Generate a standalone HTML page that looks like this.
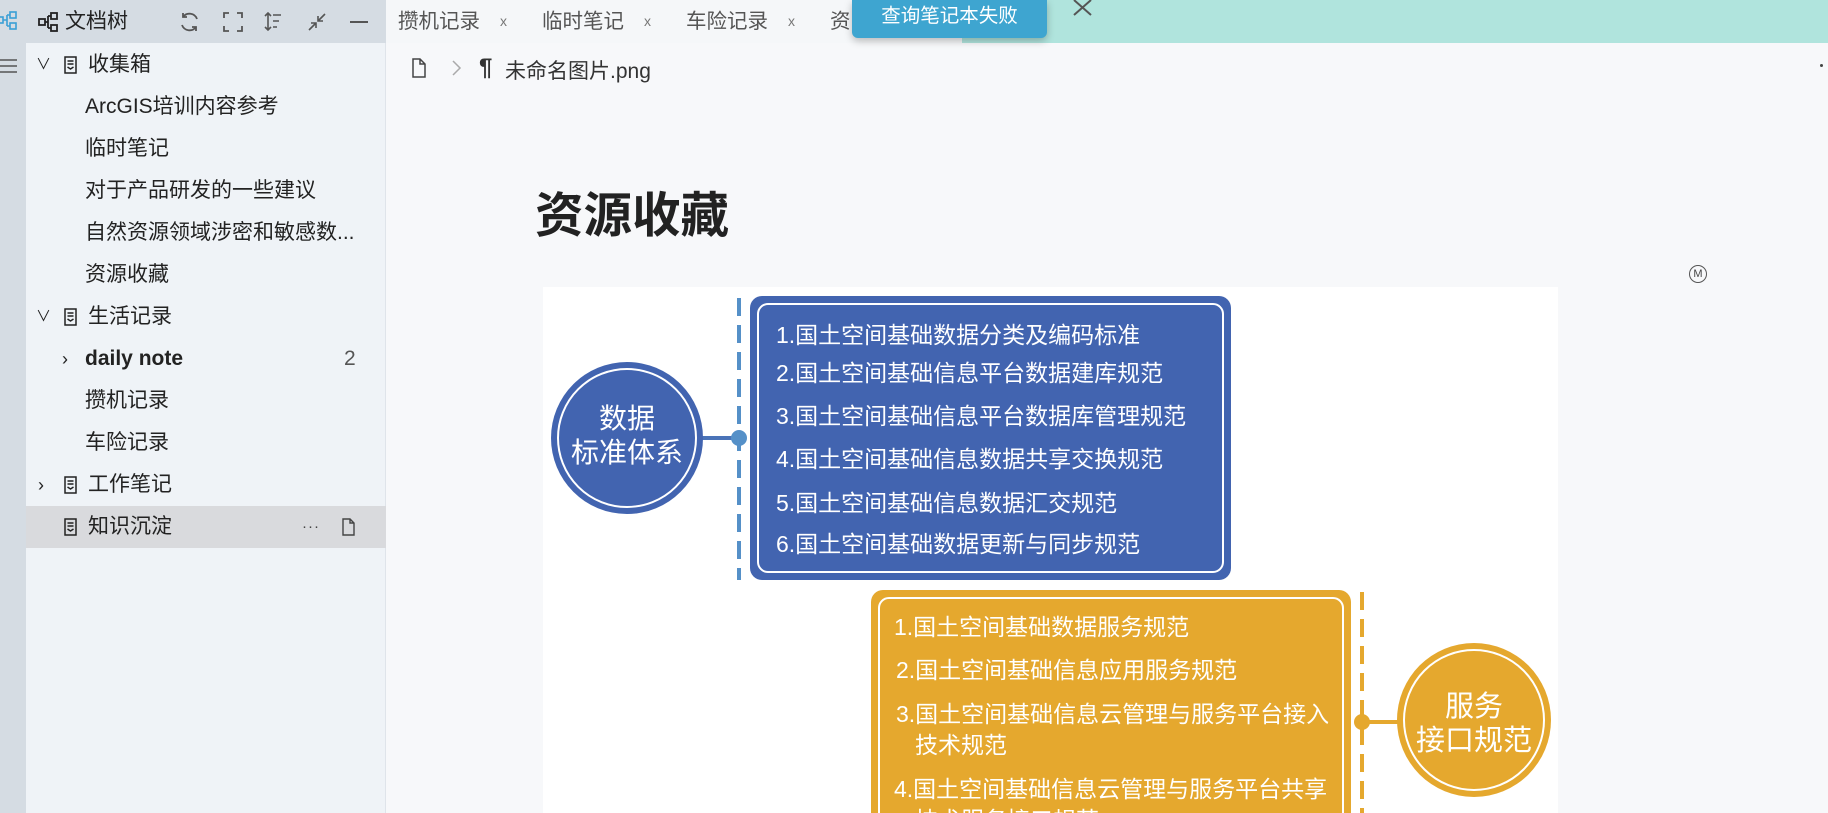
<!DOCTYPE html>
<html><head><meta charset="utf-8"><style>
*{margin:0;padding:0;box-sizing:border-box}
html,body{width:1828px;height:813px;overflow:hidden}
body{background:#f7f8fa;font-family:"Liberation Sans","Noto Sans CJK SC",sans-serif;color:#222;position:relative}
.abs{position:absolute}
.strip{left:0;top:0;width:26px;height:813px;background:#d5dce3}
.side{left:26px;top:0;width:360px;height:813px;background:#eff3f7;border-right:1px solid #dfe4ea}
.shead{left:0;top:0;width:386px;height:43px;background:#d5dce3}
.row{position:absolute;left:26px;width:360px;height:42px;font-size:21px;line-height:42px;white-space:nowrap}
.tabs{left:386px;top:0;width:576px;height:43px;background:#f5f7f9}
.teal{left:962px;top:0;width:866px;height:43px;background:#b0e4dd}
.tab{position:absolute;top:0;line-height:43px;font-size:20.5px;color:#555}
.tx{position:absolute;top:0;line-height:43px;font-size:14px;color:#777}
</style></head><body>
<div class="abs strip"></div>
<div class="abs side"></div>
<div class="abs shead"></div>
<svg class="abs" style="left:0;top:10px" width="20" height="22" viewBox="0 0 20 22"><g fill="none" stroke="#3a9fd6" stroke-width="1.6"><rect x="-3" y="7" width="6" height="6"/><rect x="10" y="2" width="6" height="6"/><rect x="10" y="13" width="6" height="6"/><path d="M3 10h4M7 5v11M7 5h3M7 16h3"/></g></svg>
<svg class="abs" style="left:0;top:56px" width="20" height="20"><g stroke="#555" stroke-width="1.6"><path d="M0 4h17M0 10h17M0 16h17"/></g></svg>
<svg class="abs" style="left:38px;top:12px" width="22" height="22" viewBox="0 0 22 22"><g fill="none" stroke="#222" stroke-width="1.8"><rect x="1" y="7" width="6" height="6"/><rect x="13" y="1" width="6" height="6"/><rect x="13" y="13" width="6" height="6"/><path d="M7 10h3M10 4v12M10 4h3M10 16h3"/></g></svg>
<div class="abs" style="left:65px;top:0;line-height:43px;font-size:21px">文档树</div>
<svg class="abs" style="left:178px;top:11px" width="24" height="22" viewBox="0 0 24 22"><g fill="none" stroke="#555" stroke-width="1.8"><path d="M19 8A8 8 0 0 0 5 6M4 14a8 8 0 0 0 14 2"/><path d="M5 2v4h4M18 20v-4h-4"/></g></svg>
<svg class="abs" style="left:223px;top:12px" width="20" height="20"><g fill="none" stroke="#555" stroke-width="1.8"><path d="M1 6V1h5M14 1h5v5M19 14v5h-5M6 19H1v-5"/></g></svg>
<svg class="abs" style="left:264px;top:12px" width="20" height="20"><g fill="none" stroke="#555" stroke-width="1.6"><path d="M4 1v17M1 4l3-3 3 3M1 15l3 3 3-3M9 3h8M9 9h6M9 15h4"/></g></svg>
<svg class="abs" style="left:307px;top:12px" width="20" height="20"><g fill="none" stroke="#555" stroke-width="1.6"><path d="M18 2l-7 7M11 4v5h5M2 18l7-7M4 11h5v5"/></g></svg>
<div class="abs" style="left:350px;top:21px;width:18px;height:2px;background:#555"></div>
<svg width="0" height="0" style="position:absolute"><defs><g id="doc"><path d="M1 1h11v16H1z M3.5 5h6M3.5 8h6M3.5 11l3 2 3-2" fill="none" stroke="#222" stroke-width="1.5"/></g></defs></svg>
<div class="row" style="top:44px"><span class="abs" style="left:10px;font-size:15px">∨</span><svg class="abs" style="left:38px;top:12px" width="14" height="19"><use href="#doc"/></svg><span class="abs" style="left:62px">收集箱</span></div>
<div class="row" style="top:86px"><span class="abs" style="left:59px">ArcGIS培训内容参考</span></div>
<div class="row" style="top:128px"><span class="abs" style="left:59px">临时笔记</span></div>
<div class="row" style="top:170px"><span class="abs" style="left:59px">对于产品研发的一些建议</span></div>
<div class="row" style="top:212px"><span class="abs" style="left:59px">自然资源领域涉密和敏感数...</span></div>
<div class="row" style="top:254px"><span class="abs" style="left:59px">资源收藏</span></div>
<div class="row" style="top:296px"><span class="abs" style="left:10px;font-size:15px">∨</span><svg class="abs" style="left:38px;top:12px" width="14" height="19"><use href="#doc"/></svg><span class="abs" style="left:62px">生活记录</span></div>
<div class="row" style="top:338px"><span class="abs" style="left:36px;font-size:18px">›</span><span class="abs" style="left:59px;font-weight:bold">daily note</span><span class="abs" style="left:318px;color:#555">2</span></div>
<div class="row" style="top:380px"><span class="abs" style="left:59px">攒机记录</span></div>
<div class="row" style="top:422px"><span class="abs" style="left:59px">车险记录</span></div>
<div class="row" style="top:464px"><span class="abs" style="left:12px;font-size:18px">›</span><svg class="abs" style="left:38px;top:12px" width="14" height="19"><use href="#doc"/></svg><span class="abs" style="left:62px">工作笔记</span></div>
<div class="row" style="top:506px;background:#d9dadd"><svg class="abs" style="left:38px;top:12px" width="14" height="19"><use href="#doc"/></svg><span class="abs" style="left:62px">知识沉淀</span><span class="abs" style="left:276px;font-size:15px;color:#444;letter-spacing:1px">···</span><svg class="abs" style="left:316px;top:12px" width="13" height="18"><path d="M1 1h7l4 4v12H1z M8 1v4h4" fill="none" stroke="#444" stroke-width="1.4"/></svg></div>
<div class="abs tabs"></div>
<div class="abs teal"></div>
<div class="tab" style="left:398px">攒机记录</div><div class="tx" style="left:500px">x</div>
<div class="tab" style="left:542px">临时笔记</div><div class="tx" style="left:644px">x</div>
<div class="tab" style="left:686px">车险记录</div><div class="tx" style="left:788px">x</div>
<div class="tab" style="left:830px">资</div>
<div class="abs" style="left:852px;top:0;width:195px;height:38px;background:#3ea5d0;border-radius:0 0 6px 6px;box-shadow:0 3px 8px rgba(0,0,0,.25);color:#fff;font-size:19.5px;line-height:32px;text-align:center">查询笔记本失败</div>
<svg class="abs" style="left:1073px;top:0" width="20" height="16"><path d="M1 0l17 15M18 0L1 15" stroke="#555" stroke-width="2"/></svg>
<svg class="abs" style="left:412px;top:58px" width="14" height="20"><path d="M1 1h7l5 5v13H1z M8 1v5h5" fill="none" stroke="#444" stroke-width="1.5"/></svg>
<svg class="abs" style="left:452px;top:60px" width="10" height="16"><path d="M1 1l7 7-7 7" fill="none" stroke="#aaa" stroke-width="1.5"/></svg>
<div class="abs" style="left:479px;top:54px;font-size:24px;font-weight:bold;color:#333">¶</div>
<div class="abs" style="left:505px;top:55px;font-size:21px;color:#333">未命名图片.png</div>
<div class="abs" style="left:1820px;top:64px;width:3px;height:3px;background:#444;border-radius:50%"></div>
<div class="abs" style="left:535px;top:186px;font-size:48.5px;font-weight:bold;color:#222;line-height:60px">资源收藏</div>
<div class="abs" style="left:1689px;top:265px;width:18px;height:18px;border:1px solid #555;border-radius:50%;font-size:11px;text-align:center;line-height:16px;color:#444">M</div>
<svg class="abs" style="left:543px;top:287px" width="1015" height="526" viewBox="543 287 1015 526" font-family="Liberation Sans, Noto Sans CJK SC, sans-serif">
<rect x="543" y="287" width="1015" height="526" fill="#fff"/>
<line x1="739" y1="298" x2="739" y2="580" stroke="#5590c8" stroke-width="4" stroke-dasharray="18,9"/>
<line x1="700" y1="438" x2="739" y2="438" stroke="#4a73b8" stroke-width="4"/>
<circle cx="739" cy="438" r="8" fill="#5590c8"/>
<circle cx="627" cy="438" r="76" fill="#4264b0"/>
<circle cx="627" cy="438" r="69" fill="none" stroke="#fff" stroke-width="2"/>
<g fill="#fff" font-size="28" text-anchor="middle"><text x="627" y="428">数据</text><text x="627" y="462">标准体系</text></g>
<rect x="750" y="296" width="481" height="284" rx="12" fill="#4264b0"/>
<rect x="758" y="304" width="465" height="268" rx="10" fill="none" stroke="#fff" stroke-width="2"/>
<g fill="#fff" font-size="23">
<text x="776" y="343">1.国土空间基础数据分类及编码标准</text>
<text x="776" y="381">2.国土空间基础信息平台数据建库规范</text>
<text x="776" y="424">3.国土空间基础信息平台数据库管理规范</text>
<text x="776" y="467">4.国土空间基础信息数据共享交换规范</text>
<text x="776" y="511">5.国土空间基础信息数据汇交规范</text>
<text x="776" y="552">6.国土空间基础数据更新与同步规范</text>
</g>
<line x1="1362" y1="592" x2="1362" y2="813" stroke="#e5a82e" stroke-width="4" stroke-dasharray="18,9"/>
<line x1="1362" y1="722" x2="1400" y2="722" stroke="#e5a82e" stroke-width="4"/>
<circle cx="1362" cy="722" r="8" fill="#e5a82e"/>
<circle cx="1474" cy="720" r="77" fill="#e5a82e"/>
<circle cx="1474" cy="720" r="70" fill="none" stroke="#fff" stroke-width="2"/>
<g fill="#fff" font-size="29" text-anchor="middle"><text x="1474" y="716">服务</text><text x="1474" y="750">接口规范</text></g>
<rect x="871" y="590" width="480" height="240" rx="12" fill="#e5a82e"/>
<rect x="879" y="598" width="464" height="240" rx="10" fill="none" stroke="#fff" stroke-width="2"/>
<g fill="#fff" font-size="23">
<text x="894" y="635">1.国土空间基础数据服务规范</text>
<text x="896" y="678">2.国土空间基础信息应用服务规范</text>
<text x="896" y="722">3.国土空间基础信息云管理与服务平台接入</text>
<text x="915" y="753">技术规范</text>
<text x="894" y="797">4.国土空间基础信息云管理与服务平台共享</text>
<text x="915" y="828">技术服务接口规范</text>
</g>
</svg>
</body></html>
